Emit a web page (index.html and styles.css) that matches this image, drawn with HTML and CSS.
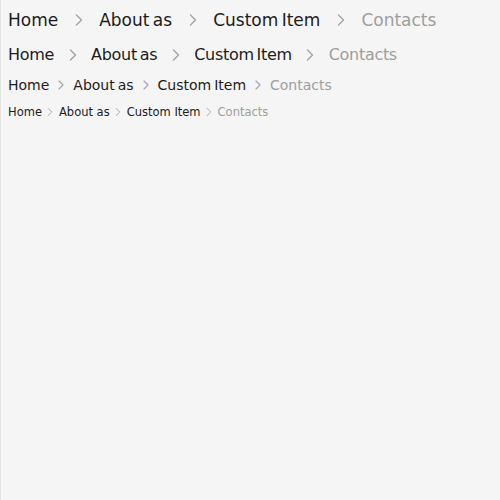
FILE: index.html
```html
<!DOCTYPE html>
<html lang="en">
<head>
<meta charset="utf-8">
<title>Breadcrumbs</title>
<link rel="stylesheet" href="styles.css">
</head>
<body>
<main class="page">
  <nav class="crumbs crumbs-xl">
    <a class="crumb">Home</a>
    <svg class="sep" viewBox="0 0 24 24"><path d="M9 6l6 6-6 6"/></svg>
    <a class="crumb">About as</a>
    <svg class="sep" viewBox="0 0 24 24"><path d="M9 6l6 6-6 6"/></svg>
    <a class="crumb">Custom Item</a>
    <svg class="sep" viewBox="0 0 24 24"><path d="M9 6l6 6-6 6"/></svg>
    <span class="crumb current">Contacts</span>
  </nav>
  <nav class="crumbs crumbs-lg">
    <a class="crumb">Home</a>
    <svg class="sep" viewBox="0 0 24 24"><path d="M9 6l6 6-6 6"/></svg>
    <a class="crumb">About as</a>
    <svg class="sep" viewBox="0 0 24 24"><path d="M9 6l6 6-6 6"/></svg>
    <a class="crumb">Custom Item</a>
    <svg class="sep" viewBox="0 0 24 24"><path d="M9 6l6 6-6 6"/></svg>
    <span class="crumb current">Contacts</span>
  </nav>
  <nav class="crumbs crumbs-md">
    <a class="crumb">Home</a>
    <svg class="sep" viewBox="0 0 24 24"><path d="M9 6l6 6-6 6"/></svg>
    <a class="crumb">About as</a>
    <svg class="sep" viewBox="0 0 24 24"><path d="M9 6l6 6-6 6"/></svg>
    <a class="crumb">Custom Item</a>
    <svg class="sep" viewBox="0 0 24 24"><path d="M9 6l6 6-6 6"/></svg>
    <span class="crumb current">Contacts</span>
  </nav>
  <nav class="crumbs crumbs-sm">
    <a class="crumb">Home</a>
    <svg class="sep" viewBox="0 0 24 24"><path d="M9 6l6 6-6 6"/></svg>
    <a class="crumb">About as</a>
    <svg class="sep" viewBox="0 0 24 24"><path d="M9 6l6 6-6 6"/></svg>
    <a class="crumb">Custom Item</a>
    <svg class="sep" viewBox="0 0 24 24"><path d="M9 6l6 6-6 6"/></svg>
    <span class="crumb current">Contacts</span>
  </nav>
</main>
</body>
</html>
```

FILE: styles.css
```css
html, body {
  margin: 0;
  padding: 0;
  height: 100%;
}

body {
  background: #f5f5f5;
  font-family: "DejaVu Sans", Verdana, sans-serif;
  color: #1c1c1c;
}

.page {
  box-sizing: border-box;
  min-height: 100%;
  border-left: 1px solid #e4e4e4;
  padding: 8px 7px;
  display: flex;
  flex-direction: column;
}

.crumbs {
  display: flex;
  align-items: center;
  white-space: nowrap;
}

.crumb {
  color: #1c1c1c;
  text-decoration: none;
}

.crumb.current {
  color: #9e9e9e;
}

.sep {
  flex: none;
  fill: none;
  stroke: #a3a3a3;
  stroke-width: 1.6;
  stroke-linecap: round;
  stroke-linejoin: round;
}

.crumbs-xl {
  font-size: 17px;
  word-spacing: -2px;
  height: 24px;
  line-height: 24px;
  margin-bottom: 11px;
}
.crumbs-xl .sep {
  width: 20px;
  height: 20px;
  margin: 0 10.5px;
}

.crumbs-lg {
  font-size: 16px;
  word-spacing: -2px;
  letter-spacing: -0.3px;
  height: 24px;
  line-height: 24px;
  margin-bottom: 8px;
}
.crumbs-lg .sep {
  width: 20px;
  height: 20px;
  margin: 0 8.5px;
}

.crumbs-md {
  font-size: 14px;
  word-spacing: -1.5px;
  height: 20px;
  line-height: 20px;
  margin-bottom: 9px;
}
.crumbs-md .sep {
  width: 16px;
  height: 16px;
  margin: 0 4px;
}

.crumbs-sm {
  font-size: 11.5px;
  height: 16px;
  line-height: 16px;
}
.crumbs-sm .sep {
  width: 14px;
  height: 14px;
  margin: 0 1.5px;
}
```
